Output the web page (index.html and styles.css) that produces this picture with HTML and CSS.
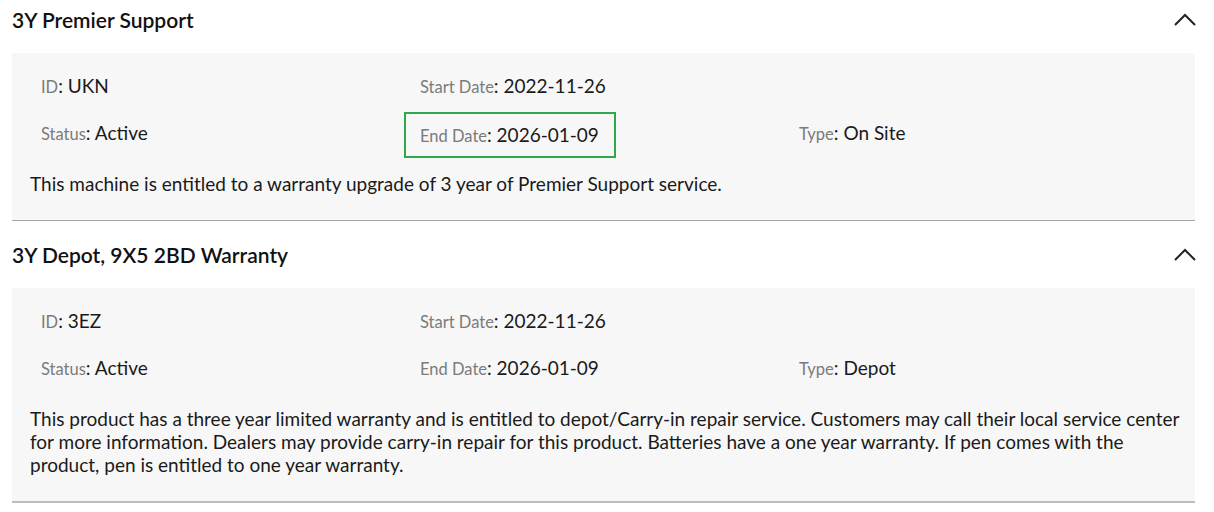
FILE: index.html
```html
<!DOCTYPE html>
<html lang="en">
<head>
  <meta charset="UTF-8">
  <title>Warranty Details</title>
  <link rel="stylesheet" href="styles.css">
</head>
<body>

  <div class="warranties">
    <!-- Premier Support -->
    <div class="warranty">
      <div class="warranty-header">
        <span class="warranty-title">3Y Premier Support</span>
        <svg class="chevron" width="22" height="13" viewBox="0 0 22 13">
          <polyline points="1,12 11,2 21,12" />
        </svg>
      </div>
      <div class="warranty-body">
        <div class="fields">
          <div class="field"><span class="label">ID</span>: UKN</div>
          <div class="field"><span class="label">Start Date</span>: 2022-11-26</div>
          <div class="field"></div>
          <div class="field"><span class="label">Status</span>: Active</div>
          <div class="field highlight"><span class="label">End Date</span>: 2026-01-09</div>
          <div class="field"><span class="label">Type</span>: On Site</div>
        </div>
        <p class="description">This machine is entitled to a warranty upgrade of 3 year of Premier Support service.</p>
      </div>
    </div>

    <!-- Depot -->
    <div class="warranty">
      <div class="warranty-header">
        <span class="warranty-title">3Y Depot, 9X5 2BD Warranty</span>
        <svg class="chevron" width="22" height="13" viewBox="0 0 22 13">
          <polyline points="1,12 11,2 21,12" />
        </svg>
      </div>
      <div class="warranty-body">
        <div class="fields">
          <div class="field"><span class="label">ID</span>: 3EZ</div>
          <div class="field"><span class="label">Start Date</span>: 2022-11-26</div>
          <div class="field"></div>
          <div class="field"><span class="label">Status</span>: Active</div>
          <div class="field"><span class="label">End Date</span>: 2026-01-09</div>
          <div class="field"><span class="label">Type</span>: Depot</div>
        </div>
        <p class="description">This product has a three year limited warranty and is entitled to depot/Carry-in repair service. Customers may call their local service center for more information. Dealers may provide carry-in repair for this product. Batteries have a one year warranty. If pen comes with the product, pen is entitled to one year warranty.</p>
      </div>
    </div>
  </div>

</body>
</html>
```

FILE: styles.css
```css
body {
  font-family: Lato, "Open Sans", sans-serif;
  background-color: #fff;
  color: #1a1a1a;
  margin: 0;
  padding: 0 19px 0 12px;
}

.warranties {
  margin-top: -14px;
}

.warranty-header {
  height: 67px;
  display: flex;
  align-items: center;
  justify-content: space-between;
}

.warranty-title {
  font-size: 21px;
  font-weight: 600;
  color: #111;
}

.chevron {
  margin-right: -1px;
  fill: none;
  stroke: #222;
  stroke-width: 2;
}

.warranty-body {
  background-color: #f7f7f7;
  border-bottom: 1px solid #a6a6a6;
  padding: 21px 8px 25px 18px;
}

.warranty:last-child .warranty-body {
  border-bottom: 2px solid #bcbcbc;
}

.fields {
  display: grid;
  grid-template-columns: 379px 379px 379px;
  row-gap: 23px;
  padding-left: 11px;
}

.field {
  font-size: 19px;
  line-height: 24px;
  height: 24px;
}

.label {
  font-size: 16.5px;
  color: #7b7b7b;
}

.field.highlight {
  justify-self: start;
  padding: 9px 15px 9px 14px;
  margin: -9px 0 -9px -16px;
  border: 2px solid #2ea84a;
}

.description {
  margin: 23px 0 0 0;
  font-size: 19px;
  line-height: 23px;
}

.warranty:last-child .description {
  margin-top: 27px;
}
```
